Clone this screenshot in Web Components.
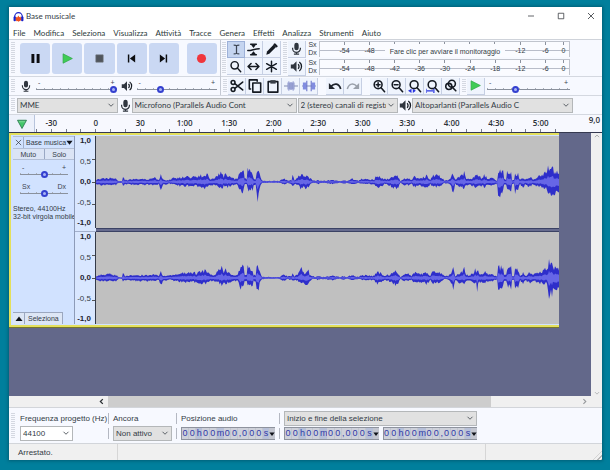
<!DOCTYPE html>
<html lang="it">
<head>
<meta charset="utf-8">
<title>Base musicale</title>
<style>
html,body{margin:0;height:100%}
body{background:#007f9c;font:8px/10px "Liberation Sans",Arial,sans-serif;color:#333b45;overflow:hidden}
</style>
</head>
<body>
<audio-editor></audio-editor>
<script>
const BASE = `:host,*{box-sizing:border-box}button{font:inherit;color:inherit;margin:0;padding:0;border:0;background:none}`;
function define(name, css, html, init) {
  const tpl = document.createElement('template');
  tpl.innerHTML = `<style>${BASE}${css}</style>`;
  customElements.define(name, class extends HTMLElement {
    constructor() {
      super();
      this.attachShadow({ mode: 'open' }).append(tpl.content.cloneNode(true));
    }
    connectedCallback() {
      if (this.ready) return;
      this.ready = true;
      const t = document.createElement('template');
      t.innerHTML = typeof html === 'function' ? html(this) : html;
      this.shadowRoot.append(t.content);
      if (init) init(this);
    }
  });
}

const S = 'fill="none" stroke="#151a22" stroke-width="1.8" stroke-linecap="round" stroke-linejoin="round"';
const LENS = `<circle cx="7" cy="6.500" r="4.500" ${S}/><path d="M10.400 10l4 4.500" ${S} stroke-width="2.400"/>`;
const ICONS = {
  logo: '<path d="M2.500 11V8a5.500 5.500 0 0 1 11 0v3" fill="none" stroke="#1a22c8" stroke-width="1.800"/><rect x=".8" y="8" width="3.400" height="7" rx="1.400" fill="#1a22c8"/><rect x="11.800" y="8" width="3.400" height="7" rx="1.400" fill="#1a22c8"/><path d="M3.800 11.500l1.200-3 1.200 1 1.500-3 1.600 2.500 1.500-1 1.400 3.500-1.200 2.500-1.400.5-1.500 1-1.600-1-1.500.3z" fill="#f0501e"/>',
  pause: '<path d="M3 2.500h3.600v11H3zM9.400 2.500H13v11H9.400z" fill="#0c0d10"/>',
  play: '<path d="M2.500 2.200L14 8 2.500 13.800z" fill="#3fcc55" stroke="#2ca344" stroke-width=".8"/>',
  stop: '<path d="M3.500 3.500h9v9h-9z" fill="#50555c" stroke="#6c7178" stroke-width=".8"/>',
  start: '<path d="M3.500 3h1.800v10H3.500zM12.500 3v10L6 8z" fill="#0c0d10"/>',
  end: '<path d="M10.700 3h1.800v10h-1.800zM3.500 3v10L10 8z" fill="#0c0d10"/>',
  record: '<circle cx="8" cy="8" r="5.600" fill="#f0363c"/>',
  ibeam: '<path d="M4.500 2.500c2 0 3 .2 3.500.9.500-.7 1.500-.9 3.500-.9M4.500 13.500c2 0 3-.2 3.500-.9.500.7 1.500.9 3.500.9M8 3.400v9.200" fill="none" stroke="#3d4552" stroke-width="1.500"/>',
  envelope: `<path d="M1 9.200c4 .8 6-1.800 14-2" ${S} stroke-width="2.200"/><path d="M4.500 1.500h7M4.500 14.500h7" ${S}/><path d="M5.200 2.500h5.600L8 6zM5.200 13.500h5.600L8 10.200z" fill="#151a22"/>`,
  pencil: '<path d="M1.500 14.500l1-4 8-8.200 2.800 2.800-8 8.200z" fill="#151a22"/><path d="M12 2l2 2" stroke="#151a22" stroke-width="3" stroke-linecap="round"/>',
  lens: LENS,
  shift: `<path d="M1.500 8h13M5 4.300L1.300 8 5 11.700M11 4.300L14.700 8 11 11.700" ${S}/>`,
  multi: `<path d="M8 1.500v13M2 4.500l12 7M14 4.500l-12 7" ${S} stroke-width="2"/>`,
  mic: '<rect x="5.300" y="1" width="5.400" height="9" rx="2.700" fill="#30363f"/><path d="M3.200 7v1a4.800 4.800 0 0 0 9.600 0V7M8 12.500V15M4.800 15h6.400" fill="none" stroke="#30363f" stroke-width="1.500"/>',
  speaker: '<path d="M1 5.500h3l4-4v13l-4-4H1z" fill="#30363f"/><path d="M10 5.300a3.800 3.800 0 0 1 0 5.400M11.500 2.500a7 7 0 0 1 0 11" fill="none" stroke="#151a22" stroke-width="1.600"/>',
  cut: `<circle cx="3.500" cy="4" r="2.200" ${S}/><circle cx="3.500" cy="12" r="2.200" ${S}/><path d="M5.500 5.300L14.500 12.500M5.500 10.700L14.500 3.500" ${S} stroke-width="2"/>`,
  copy: `<path d="M5.500 4.500h9v10.500h-9zM3 11.500H1.500V1h9v1.500" ${S} stroke-width="1.700"/>`,
  paste: `<path d="M2.500 3h11v12h-11z" ${S} stroke-width="1.700"/><path d="M5 1.300h6v4H5z" fill="#3a4049"/>`,
  trim: '<path d="M0 8h16" stroke="#8790b4" stroke-width="1.200"/><path d="M4 4h8v8H4z" fill="#8b95c9"/><path d="M5.500 2.500v11M8 3.500v9M10.500 2.500v11" stroke="#9fa8d8" stroke-width="1.300"/>',
  silence: '<path d="M0 8h16" stroke="#8790c0" stroke-width="1.200"/><path d="M1 4h4v8H1zM11 4h4v8h-4z" fill="#818ce0"/><path d="M5.500 2v12M10.500 2v12" stroke="#6670c8" stroke-width="1.200"/>',
  undo: '<path d="M3.500 8.500C7 4.500 12.500 4.500 14.500 11.500" fill="none" stroke="#20252e" stroke-width="2"/><path d="M1 4.500v6.800h7z" fill="#20252e"/>',
  redo: '<path d="M12.500 8.500C9 4.500 3.500 4.500 1.500 11.500" fill="none" stroke="#9aa0aa" stroke-width="1.700"/><path d="M15 4.500v6.800H8z" fill="#9aa0aa"/>',
  zin: LENS + `<path d="M7 4.300v4.400M4.800 6.500h4.400" ${S} stroke-width="1.300"/>`,
  zout: LENS + `<path d="M4.800 6.500h4.400" ${S} stroke-width="1.300"/>`,
  zsel: LENS + '<path d="M0 13.500l4-2.500v5zM9 13.500L5.500 11v5z" fill="#2a35e0"/>',
  zfit: LENS + '<path d="M0 11v5M9 11v5M1 13.500h7" stroke="#2a35e0" stroke-width="1.400"/>',
  ztog: `<circle cx="9" cy="5.500" r="4" ${S}/><circle cx="5.500" cy="8.500" r="3.500" ${S} stroke-width="1.300"/><path d="M9 9l4.500 4.500" ${S} stroke-width="2.200"/>`,
  pin: '<path d="M2 3h12L8 14z" fill="#43c76a" stroke="#2f7f52" stroke-width="1.200"/><path d="M4 5h8" stroke="#8fe0a4"/>',
  min: '<path d="M2 8h12" stroke="#30343a" stroke-width="1.500"/>',
  max: '<path d="M2.500 2.500h11v11h-11z" fill="none" stroke="#30343a" stroke-width="1.500"/>',
  close: '<path d="M2 2l12 12M14 2L2 14" stroke="#30343a" stroke-width="1.600"/>',
  chev: '<path d="M3 5.500l5 5 5-5" fill="none" stroke="#5c6268" stroke-width="2"/>',
  up: '<path d="M2.500 11L8 5.500l5.500 5.500" fill="none" stroke="#a4a6a8" stroke-width="2.500"/>',
  down: '<path d="M2.500 5.500L8 11l5.500-5.500" fill="none" stroke="#b4b6b8" stroke-width="2.500"/>',
  left: '<path d="M11 2.500L5.500 8l5.500 5.500" fill="none" stroke="#2c3034" stroke-width="3"/>',
  right: '<path d="M5.500 2.500L11 8l-5.500 5.500" fill="none" stroke="#96999c" stroke-width="2.500"/>',
  tri: '<path d="M1 4h14L8 13z" fill="#10131a"/>',
  triup: '<path d="M1 12h14L8 3z" fill="#10131a"/>'
};
define('ui-icon', `:host{display:inline-block;width:var(--size,12px);height:var(--size,12px);flex:none}svg{display:block;width:100%;height:100%}`,
  el => `<svg viewBox="0 0 16 16" aria-hidden="true">${ICONS[el.getAttribute('name')]}</svg>`);

define('tool-grip', `:host{display:block;flex:none;width:6px;align-self:stretch;margin:2px 0;background:repeating-linear-gradient(#b9bec9 0 1px,transparent 1px 2px) content-box;padding:0 1px;opacity:.55}`, '');

define('tool-button', `:host{display:block;flex:none;width:18px;height:17px}
button{display:grid;place-items:center;width:100%;height:100%;border:solid #c6cfe3;border-width:0 1px 1px 0;background:#eff4fd}
:host([pressed]) button{background:#c5d5f0;border:1px solid #9db1d8}
:host([big]){flex:1 1 30px;width:auto;height:31px}:host([big]) button{border:0;border-radius:3px;background:#cad8f3}`,
  el => `<button aria-label="${el.getAttribute('label')}"><ui-icon name="${el.getAttribute('icon')}"></ui-icon></button>`);

define('pick-list', `:host{display:block;position:relative;height:15px;min-width:0}
select{appearance:none;width:100%;height:100%;margin:0;padding:0 11px 0 2px;border:1px solid #b4b7b9;border-radius:0;background:var(--fill,#e1e1e1);font:inherit;color:inherit;text-overflow:clip}
ui-icon{--size:8px;position:absolute;right:3px;top:3px;pointer-events:none}`,
  el => `<select id="s" aria-label="${el.getAttribute('label')}"><option>${el.getAttribute('value')}</option></select><ui-icon name="chev"></ui-icon>`);

define('gain-slider', `:host{display:grid;grid-template-rows:6px 9px;min-width:0;font-size:7px;line-height:7px;color:#3d4450}
div{display:flex;justify-content:space-between;padding:0 2px}
input{appearance:none;width:100%;height:9px;margin:0;background:linear-gradient(#8a919d,#8a919d) 0 4px/100% 1px no-repeat,repeating-linear-gradient(90deg,#a9afba 0 1px,transparent 1px 8px) 0 3px/100% 2px no-repeat}
input::-webkit-slider-thumb{appearance:none;box-sizing:border-box;width:7px;height:7px;border-radius:50%;background:#a9b4f4;border:2px solid #3440cf}`,
  el => `<div><span>${el.getAttribute('lo') || '-'}</span><span>${el.getAttribute('hi') || '+'}</span></div><input type="range" aria-label="${el.getAttribute('label')}" value="${el.getAttribute('value')}">`);

define('title-bar', `:host{display:flex;align-items:center;height:18px;padding:0 7px 0 4px;background:#fff;font:8px/10px Lato,"Open Sans",sans-serif}
ui-icon{--size:11px;margin-right:2px}span{flex:1}nav{display:flex;gap:22px}nav ui-icon{--size:8px;margin:0}button{display:grid}`,
  `<ui-icon name="logo"></ui-icon><span>Base musicale</span><nav><button aria-label="Riduci"><ui-icon name="min"></ui-icon></button><button aria-label="Ingrandisci"><ui-icon name="max"></ui-icon></button><button aria-label="Chiudi"><ui-icon name="close"></ui-icon></button></nav>`);

define('menu-bar', `:host{display:flex;gap:8px;align-items:center;height:14px;padding:2px 4px 0;background:#fff;font:8px/10px Lato,"Open Sans",sans-serif;color:#2c3a3a}`,
  ['File','Modifica','Seleziona','Visualizza','Attività','Tracce','Genera','Effetti','Analizza','Strumenti','Aiuto'].map(t => `<button>${t}</button>`).join(''));

define('transport-bar', `:host{display:flex;align-items:center;gap:2px;height:36px;padding:0 3px 0 1px}tool-button{--size:13px}tool-button[icon=record]{margin-left:6px}tool-grip{margin-right:2px}`,
  '<tool-grip></tool-grip>' + [['pause','Pausa'],['play','Riproduci'],['stop','Arresta'],['start','Inizio'],['end','Fine'],['record','Registra']].map(([i,l]) => `<tool-button big icon="${i}" label="${l}"></tool-button>`).join(''));

define('mixer-bar', `:host{display:flex;align-items:center;height:19px;padding:0 3px 0 1px;border-top:1px solid #d4d8e0}ui-icon{--size:12px;margin:0 4px}gain-slider{flex:1}`,
  `<tool-grip></tool-grip><ui-icon name="mic"></ui-icon><gain-slider label="Volume registrazione" value="100"></gain-slider><ui-icon name="speaker"></ui-icon><gain-slider label="Volume riproduzione" value="28"></gain-slider>`);

define('tool-palette', `:host{display:grid;grid-template-columns:repeat(3,18px);--size:13px;align-content:center}`,
  [['ibeam','Selezione','pressed'],['envelope','Inviluppo',''],['pencil','Disegno',''],['lens','Zoom',''],['shift','Spostamento',''],['multi','Multi-strumento','']].map(([i,l,p]) => `<tool-button ${p} icon="${i}" label="${l}"></tool-button>`).join(''));

define('level-meter', `:host{display:flex;align-items:center;height:18px;min-width:0;font-size:7px;line-height:9px}
tool-button{--size:13px}
.ch{width:13px;flex:none;text-align:center;line-height:8px;display:grid}
.box{display:flex;flex:1;height:16px;border:1px solid #c0c4cd;border-width:1px 1px 0;padding-left:12px;background:linear-gradient(#b9bdc9,#b9bdc9) 0 8px/100% 1px no-repeat #fafbff}
.box>*{flex:1;text-align:center;padding-top:4px;background:linear-gradient(#8c929e,#8c929e) 50% 0/1px 3px no-repeat}
.box>.msg{flex:5;white-space:nowrap;background:linear-gradient(#fafbff,#fafbff) 50% 6px/120px 6px no-repeat,repeating-linear-gradient(90deg,transparent 0 12px,#8c929e 12px 13px,transparent 13px 25px) 0 0/100% 2px no-repeat}
.box>.z{flex:0 0 11px}`,
  el => {
    const msg = el.getAttribute('message');
    const cells = (msg ? [-54,-48,msg,-12,-6] : [-54,-48,-42,-36,-30,-24,-18,-12,-6]);
    return `<tool-button icon="${el.getAttribute('icon')}" label="${el.getAttribute('label')}"></tool-button><div class="ch"><span>Sx</span><span>Dx</span></div><div class="box">${cells.map(c => c === msg ? `<button class="msg">${c}</button>` : `<span>${c}</span>`).join('')}<span class="z">0</span></div>`;
  });

define('edit-bar', `:host{display:flex;align-items:center;height:19px;border-top:1px solid #d4d8e0;--size:14px;padding-right:32px}
.gap{width:8px;flex:none}tool-button[icon=play]{--size:13px}gain-slider{flex:1;margin-left:2px}tool-grip{margin-left:1px}`,
  (() => {
    const b = (i, l) => `<tool-button icon="${i}" label="${l}"></tool-button>`;
    return '<tool-grip></tool-grip>' + b('cut','Taglia') + b('copy','Copia') + b('paste','Incolla') + b('trim','Rifila') + b('silence','Silenzia') + '<span class="gap"></span>' + b('undo','Annulla') + b('redo','Ripeti') + '<span class="gap"></span>' + b('zin','Zoom avanti') + b('zout','Zoom indietro') + b('zsel','Adatta selezione') + b('zfit','Adatta progetto') + b('ztog','Alterna zoom') + '<tool-grip></tool-grip>' + b('play','Riproduci alla velocità') + '<gain-slider label="Velocità" value="33"></gain-slider>';
  })());

define('device-bar', `:host{display:grid;grid-template-columns:6px 100fr 12px 164fr 100fr 12px 160fr;column-gap:1px;align-items:center;height:19px;padding:0 29px 0 1px;border-top:1px solid #d4d8e0;font:8px/10px Lato,"Open Sans",sans-serif}ui-icon{--size:13px}`,
  `<tool-grip></tool-grip><pick-list label="Host audio" value="MME"></pick-list><ui-icon name="mic"></ui-icon><pick-list label="Registrazione" value="Microfono (Parallels Audio Cont"></pick-list><pick-list label="Canali" value="2 (stereo) canali di registr"></pick-list><ui-icon name="speaker"></ui-icon><pick-list label="Riproduzione" value="Altoparlanti (Parallels Audio C"></pick-list>`);

define('time-ruler', `:host{display:flex;height:18px;background:#f7f8fe;border-top:1px solid #d4d8e0;font:600 8px/10px "Open Sans",sans-serif;color:#2b3038;overflow:hidden}
.pin{display:grid;place-items:center;width:26px;flex:none;border-right:1px solid #b8c4dc;background:#edf1fb;z-index:1;position:relative}
.scale{display:flex;flex:1;margin-left:-6px}
.cell{flex:1;display:grid;grid-template:14px 3px/repeat(3,1fr)}
.cell b{grid-column:1/-1;font-weight:inherit;text-align:center;padding-top:3px}
.cell i{background:linear-gradient(#777d88,#777d88) 50% 0/1px 100% no-repeat}
.last{flex:none;width:39px;text-align:right;padding:0 2px 0 0}`,
  `<button class="pin" aria-label="Testina"><ui-icon name="pin"></ui-icon></button><div class="scale">${['-30','0','30','1:00','1:30','2:00','2:30','3:00','3:30','4:00','4:30','5:00'].map(t => `<div class="cell"><b>${t}</b><i></i><i></i><i></i></div>`).join('')}</div><span class="last">9,0</span>`);

define('track-panel', `:host{display:flex;flex-direction:column;width:62px;background:#d1e2ff;font-size:7px;line-height:9px;border-right:1px solid #8d9bb8;overflow:hidden}
.head{display:grid;grid-template-columns:11px 1fr;height:13px;border:1px solid #b3bfd6;border-width:1px 0}
.head button{display:flex;align-items:center;overflow:hidden;white-space:nowrap;--size:7px}
.head button:first-child{justify-content:center;border-right:1px solid #a0adc8}.head button+button{padding-left:2px}
.ms{display:grid;grid-template-columns:1fr 1fr;height:11px;background:#dbe4f5;border-bottom:1px solid #b3bfd6}.ms button+button{border-left:1px solid #9aa8c4}
gain-slider{margin:4px 6px 0 7px}
p{margin:7px 0 0;line-height:8px;white-space:nowrap}
.foot{display:flex;margin-top:auto;height:12px;--size:8px}.foot button{display:grid;place-items:center;border:1px solid #9ba7bf;border-width:1px 1px 0 0;background:#dde6f5}.foot button:first-child{width:12px}.foot button+button{padding:0 3px}`,
  `<div class="head"><button aria-label="Chiudi traccia"><ui-icon name="close"></ui-icon></button><button>Base musica<ui-icon name="tri"></ui-icon></button></div><div class="ms"><button>Muto</button><button>Solo</button></div><gain-slider label="Guadagno" value="50"></gain-slider><gain-slider label="Bilanciamento" lo="Sx" hi="Dx" value="50"></gain-slider><p>Stereo, 44100Hz<br>32-bit virgola mobile</p><div class="foot"><button aria-label="Comprimi"><ui-icon name="triup"></ui-icon></button><button>Seleziona</button></div>`);

/* Envelope points: time position, upper and lower peak. */
const ENV = [[95,2,2],[98,3,3],[110,4,3],[115,3,3],[118,.7,.7],[121,1,1],[122,5,4],[124,2,2],[138,3,3],[150,3,3],[154,4,3],[158,2,2],[160,8,7],[162,3,3],[168,2,1.5],[170,3,2],[180,5,4],[186,5,4],[196,5,4],[204,8,6],[206,8,6],[210,3,3],[214,4,3],[216,6,4],[221,10,7],[223,5,4],[225,8,6],[229,5,4],[234,3,3],[237,3,3],[239,10,9],[241,13,11],[243,11,9],[244,3,3],[246,3,3],[247,12,8],[249,11,9],[252,10,8],[253,3,3],[255,3,3],[256,10,10],[257,11,16],[259,8,6],[261,2,2],[262,1,1],[275,1,.6],[279,1,.8],[281,3,2],[284,3,3],[287,1.5,1],[291,2,2],[292,6,4],[294,2,2],[297,4,3],[301,10,7],[303,5,6],[308,7,6],[309,4,3],[312,2,1],[315,1,1],[317,2,2],[322,1,1],[332,2,2],[340,1,.6],[343,2,2],[346,1,.7],[352,3,2],[358,1,1],[361,3,2],[374,2,2],[375,6,6],[380,5,5],[384,3,2],[388,3,3],[392,5,5],[396,7,7],[398,5,5],[400,1,1],[404,4,3],[408,4,3],[411,2,2],[414,5,5],[418,5,4],[422,4,4],[427,7,6],[430,2,2],[432,6,5],[437,7,5],[440,5,4],[444,2,1],[448,2,2],[450,4,3],[453,9,10],[455,2,2],[460,6,5],[464,9,6],[466,3,3],[470,3,3],[473,5,4],[475,8,6],[478,6,5],[481,4,4],[484,7,5],[487,4,4],[492,4,3],[496,2,2],[497,1,1],[498,10,12],[500,11,14],[503,10,7],[504,3,3],[506,3,3],[507,11,7],[509,9,9],[511,11,10],[512,2,2],[514,2,2],[515,9,10],[518,8,9],[520,2,2],[523,5,6],[525,2,2],[529,5,5],[533,3,3],[537,5,4],[540,6,5],[543,8,6],[546,9,5],[549,16,15],[552,14,16],[555,11,11],[559,9,9]];
define('wave-view', `:host{display:block;background:#c0c0c0;min-width:0;min-height:0}svg{display:block;width:100%;height:100%}`,
  el => {
    let seed = +el.getAttribute('seed');
    const rnd = () => (seed = (seed * 16807) % 2147483647) / 2147483647;
    const second = el.hasAttribute('right');
    let top = '', bottom = '', rt = '', rb = '', k = 0;
    for (let x = 95; x <= 559; x++) {
      while (k < ENV.length - 2 && ENV[k + 1][0] <= x) k++;
      const a = ENV[k], b = ENV[k + 1], f = Math.min(1, (x - a[0]) / (b[0] - a[0]));
      let u = a[1] + (b[1] - a[1]) * f, d = a[2] + (b[2] - a[2]) * f;
      u *= .65 + .6 * rnd(); d *= .65 + .6 * rnd();
      if (second && x === 549) { u = 19; d = 21; }
      if (second && x === 477) d = 14;
      if (second && x === 257) { u = 13; d = 11; }
      const X = x - 95, ru = Math.max(.5, u * .38), rd = Math.max(.5, d * .38);
      top += `L${X} ${(46 - Math.max(.6, u)).toFixed(1)}`;
      bottom = `L${X} ${(46 + Math.max(.6, d)).toFixed(1)}` + bottom;
      rt += `L${X} ${(46 - ru).toFixed(1)}`;
      rb = `L${X} ${(46 + rd).toFixed(1)}` + rb;
    }
    return `<svg viewBox="0 0 464 92" preserveAspectRatio="none" role="img" aria-label="Forma d'onda"><path d="M0 46${top}${bottom}Z" fill="#2e2eca"/><path d="M0 46${rt}${rb}Z" fill="#6666e6"/></svg>`;
  });

define('amp-scale', `:host{display:flex;flex-direction:column;justify-content:space-between;padding:0 4px 0 0;text-align:right;background:#d9e7ff;border-right:1px solid #333a48;line-height:10px;
background-image:linear-gradient(#555,#555),linear-gradient(#555,#555),linear-gradient(#555,#555);background-size:3px 1px;background-repeat:no-repeat;background-position:100% 25%,100% 50%,100% 75%}b{color:#1d2330}`,
  `<b>1,0</b><span>0,5</span><b>0,0</b><span>-0,5</span><b>-1,0</b>`);

define('audio-track', `:host{display:grid;grid-template:92px 4px 92px/62px 21px 1fr;border:solid #e4e05c;border-width:2px 0 2px 2px;box-shadow:0 1px #77762c;padding:1px 0 1px 2px;background:#d1e2ff}
track-panel{grid-row:1/4}.sep{grid-column:3;background:#666b8e;border:solid #3b4264;border-width:1px 0}.sp{grid-column:2;background:#d9e7ff;border-bottom:1px solid #a3b0cc}`,
  `<track-panel></track-panel><amp-scale></amp-scale><wave-view seed="4711"></wave-view><span class="sp"></span><span class="sep"></span><amp-scale></amp-scale><wave-view right seed="9173"></wave-view>`);

define('time-field', `:host{display:flex;height:13px;border:1px solid #8e939e;border-width:1px 0 1px 1px;background:#c3c6d0;color:#3039a8;font-size:9px;line-height:11px;--size:6px;min-width:0}
span{flex:1 1 7px;text-align:center;background:#ced1da;margin-right:1px}span.u{background:#b7c0d8;margin:0}span.c{flex:0 0 3px;margin:0}ui-icon{align-self:center;margin-left:auto}`,
  () => [...'00h00m00,000s'].map(c => `<span class="${/[hms]/.test(c) ? 'u' : c === ',' ? 'c' : ''}">${c}</span>`).join('') + '<ui-icon name="tri"></ui-icon>');

define('selection-bar', `:host{display:grid;grid-template-columns:6px 84px 1px 59px 1px 94px 1px 193px;grid-template-rows:15px 15px;column-gap:4px;align-items:center;padding:3px 1px 2px;background:#f7f9ff;border:solid #d2d5da;border-width:1px 0}
tool-grip{grid-row:1/3}label{padding-top:1px;white-space:nowrap}.v{width:1px;height:11px;background:#b4b8c2}.rate{width:53px;--fill:#fff}.two{display:grid;grid-template-columns:1fr 1fr;gap:4px}`,
  `<tool-grip></tool-grip><label>Frequenza progetto (Hz)</label><i class="v"></i><label>Ancora</label><i class="v"></i><span>Posizione audio</span><i class="v"></i><pick-list label="Intervallo" value="Inizio e fine della selezione"></pick-list>
   <pick-list class="rate" label="Frequenza progetto (Hz)" value="44100"></pick-list><i class="v"></i><pick-list class="snap" label="Ancora" value="Non attivo"></pick-list><i class="v"></i><time-field></time-field><i class="v"></i><div class="two"><time-field></time-field><time-field></time-field></div>`,
  el => {
    const labels = el.shadowRoot.querySelectorAll('label');
    el.shadowRoot.querySelectorAll('.rate,.snap').forEach((p, i) => labels[i].addEventListener('click', () => p.shadowRoot.querySelector('select').focus()));
  });

define('h-scroll', `:host{display:flex;align-items:center;height:11px;background:#f0f0f0;--size:7px;padding:0 14px 0 89px}button{display:grid}.t{flex:1;display:flex;align-self:stretch;margin-left:3px}.t i{flex:0 1 81%;background:#cdcdcd}`,
  `<button aria-label="Scorri a sinistra"><ui-icon name="left"></ui-icon></button><div class="t"><i></i></div><button aria-label="Scorri a destra"><ui-icon name="right"></ui-icon></button>`);

define('v-scroll', `:host{display:flex;flex-direction:column;justify-content:space-between;align-items:center;background:#f0f0f0;--size:6px}button{display:grid}`,
  `<button aria-label="Scorri in alto"><ui-icon name="up"></ui-icon></button><button aria-label="Scorri in basso"><ui-icon name="down"></ui-icon></button>`);

define('status-bar', `:host{display:grid;grid-template-columns:109px 1fr 116px;height:16px;align-items:center;background:#f0f0f0}span{padding-left:9px;border-right:1px solid #d6d6d6;height:16px;line-height:17px}
i{justify-self:end;align-self:end;width:9px;height:9px;background:repeating-linear-gradient(135deg,#b8b8b8 0 1px,transparent 1px 3px);clip-path:polygon(100% 0,100% 100%,0 100%)}`,
  `<span>Arrestato.</span><span></span><i></i>`);

define('audio-editor', `:host{display:flex;min-height:100vh;padding:7px 8px 10px 9px}
main{display:flex;flex-direction:column;flex:1;min-width:0;background:#f7f9ff;box-shadow:0 0 3px 1px #00435688}
.bars{display:grid;grid-template-columns:212px 1fr;border-top:1px solid #cfd3da}
.l{border-right:1px solid #c4c9d3}
.tools{display:grid;grid-template-columns:6px 55px 6px 1fr;height:36px;padding-right:32px}
.meters{display:grid;align-content:center;min-width:0}
.canvas{flex:1;display:grid;grid-template-columns:1fr 32px 11px;background:#63688a;border-top:1px solid #35394f}
audio-track{align-self:start}v-scroll{grid-column:3}`,
  `<main><title-bar></title-bar><menu-bar></menu-bar>
   <div class="bars"><div class="l"><transport-bar></transport-bar><mixer-bar></mixer-bar></div>
   <div><div class="tools"><tool-grip></tool-grip><tool-palette></tool-palette><tool-grip></tool-grip><div class="meters"><level-meter icon="mic" label="Livello registrazione" message="Fare clic per avviare il monitoraggio"></level-meter><level-meter icon="speaker" label="Livello riproduzione"></level-meter></div></div><edit-bar></edit-bar></div></div>
   <device-bar></device-bar><time-ruler></time-ruler>
   <div class="canvas"><audio-track></audio-track><v-scroll></v-scroll></div>
   <h-scroll></h-scroll><selection-bar></selection-bar><status-bar></status-bar></main>`);
</script>
</body>
</html>
